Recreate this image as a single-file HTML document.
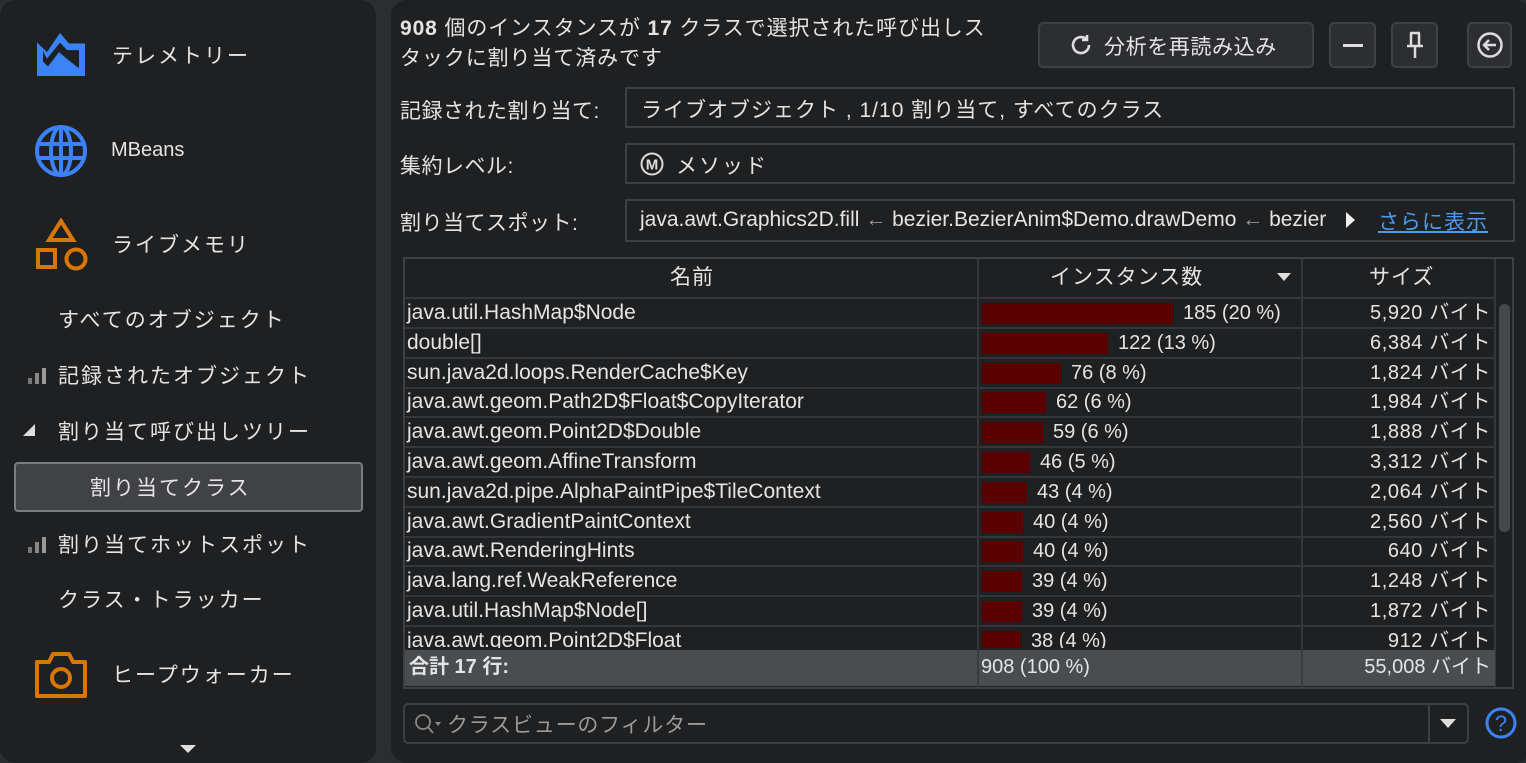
<!DOCTYPE html>
<html><head><meta charset="utf-8"><style>
*{margin:0;padding:0;box-sizing:border-box}
body{width:1526px;height:763px;background:#2b2d30;font-family:"Liberation Sans","Noto Sans CJK JP",sans-serif;color:#e4e4e4;position:relative;overflow:hidden}
.a{position:absolute;white-space:nowrap}
.side{left:0;top:0;width:376px;height:763px;background:#1f2022;border-radius:16px}
.main{left:391px;top:0;width:1140px;height:763px;background:#1f2022;border-radius:16px}
.nav{font-size:21px;letter-spacing:2px}
.box{border:2px solid #3d3f42;background:#1f2022}
.btn{background:#2c2e31;border:2px solid #3e4043;border-radius:5px}
.tb{left:403px;top:257px;width:1111px;height:432px;border:2px solid #3d3f42;background:#1f2022;overflow:hidden}
.row{position:absolute;left:0;width:1090px;height:30px;border-bottom:2px solid #34363a;font-size:20px;line-height:24px}
.row span{position:absolute;top:2px;line-height:24px;height:24px}
.bar{position:absolute;top:4px;height:21px;background:#5a0000}
.vl{position:absolute;top:0;width:2px;background:#34363a}
</style></head><body>
<div class="a side"></div>
<div class="a main"></div>

<!-- sidebar -->
<svg class="a" style="left:36px;top:31px" width="50" height="46" viewBox="0 0 50 48" preserveAspectRatio="none">
<path d="M1 12 L11 22 L24 2 L33 13 L49 13 L49 47 L1 47 Z" fill="#3b82f6"/>
<path d="M7 21 L11 29 L24 12 L31 20 L43 20 L43 39 L32 30 L23 22 L12 37 L7 32 Z" fill="#1f2022"/>
</svg>
<div class="a nav" style="left:112px;top:40px">テレメトリー</div>
<svg class="a" style="left:33px;top:123px" width="56" height="56" viewBox="0 0 56 56" fill="none" stroke="#3b82f6" stroke-width="4">
<circle cx="28" cy="28" r="24"/><ellipse cx="28" cy="28" rx="10" ry="24"/><line x1="4" y1="21" x2="52" y2="21"/><line x1="4" y1="35" x2="52" y2="35"/><line x1="28" y1="4" x2="28" y2="52"/>
</svg>
<div class="a" style="left:111px;top:139px;font-size:20px">MBeans</div>
<svg class="a" style="left:35px;top:218px" width="54" height="54" viewBox="0 0 54 54" fill="none" stroke="#d97706" stroke-width="4">
<path d="M26 3 L38 22 L14 22 Z"/><rect x="3" y="32" width="17" height="17"/><circle cx="41" cy="41" r="9.5"/>
</svg>
<div class="a nav" style="left:112px;top:229px">ライブメモリ</div>
<div class="a nav" style="left:58px;top:304px">すべてのオブジェクト</div>
<svg class="a" style="left:28px;top:366px" width="20" height="18"><rect x="0" y="12" width="4" height="6" fill="#777"/><rect x="7" y="7" width="4" height="11" fill="#888"/><rect x="14" y="2" width="4" height="16" fill="#999"/></svg>
<div class="a nav" style="left:58px;top:360px">記録されたオブジェクト</div>
<svg class="a" style="left:22px;top:423px" width="14" height="14"><path d="M1 13 L13 13 L13 1 Z" fill="#ddd"/></svg>
<div class="a nav" style="left:58px;top:416px">割り当て呼び出しツリー</div>
<div class="a" style="left:14px;top:462px;width:349px;height:50px;background:#404245;border:2px solid #7a7c7f;border-radius:4px"></div>
<div class="a nav" style="left:90px;top:472px">割り当てクラス</div>
<svg class="a" style="left:28px;top:535px" width="20" height="18"><rect x="0" y="12" width="4" height="6" fill="#777"/><rect x="7" y="7" width="4" height="11" fill="#888"/><rect x="14" y="2" width="4" height="16" fill="#999"/></svg>
<div class="a nav" style="left:58px;top:529px">割り当てホットスポット</div>
<div class="a nav" style="left:58px;top:584px">クラス・トラッカー</div>
<svg class="a" style="left:34px;top:650px" width="54" height="50" viewBox="0 0 54 50" fill="none" stroke="#d97706" stroke-width="4">
<path d="M3 12 L15 12 L19 4 L35 4 L39 12 L51 12 L51 46 L3 46 Z" stroke-linejoin="round"/><circle cx="27" cy="28" r="9"/>
</svg>
<div class="a nav" style="left:112px;top:659px">ヒープウォーカー</div>
<svg class="a" style="left:180px;top:745px" width="16" height="10"><path d="M0 0 L16 0 L8 8 Z" fill="#ddd"/></svg>

<!-- header -->
<div class="a" style="left:400px;top:14px;font-size:21px;line-height:30px;letter-spacing:0.9px"><b>908</b> 個のインスタンスが <b>17</b> クラスで選択された呼び出しス<br>タックに割り当て済みです</div>
<div class="a btn" style="left:1038px;top:22px;width:276px;height:46px"></div>
<svg class="a" style="left:1069px;top:33px" width="24" height="24" viewBox="0 0 24 24" fill="none" stroke="#ddd" stroke-width="2.6"><path d="M20 12 A8 8 0 1 1 17 5.8"/><path d="M18 2 L18 7 L13 7" stroke-linejoin="miter"/></svg>
<div class="a" style="left:1104px;top:31px;font-size:21px;letter-spacing:0.6px">分析を再読み込み</div>
<div class="a btn" style="left:1329px;top:22px;width:47px;height:46px"></div>
<div class="a" style="left:1343px;top:44px;width:20px;height:3px;background:#ddd"></div>
<div class="a btn" style="left:1391px;top:22px;width:47px;height:46px"></div>
<svg class="a" style="left:1405px;top:31px" width="20" height="28" viewBox="0 0 20 28" fill="none" stroke="#ddd" stroke-width="2.5"><path d="M5 2 H15 M6 2 V14 M14 2 V14 M2 15 H18 M10 15 V27"/></svg>
<div class="a btn" style="left:1467px;top:22px;width:45px;height:46px"></div>
<svg class="a" style="left:1476px;top:31px" width="28" height="28" viewBox="0 0 28 28" fill="none" stroke="#ddd" stroke-width="2.5"><circle cx="14" cy="14" r="11.5"/><path d="M8 14 H20 M13 9 L8 14 L13 19"/></svg>

<div class="a" style="left:400px;top:95px;font-size:21px;letter-spacing:0.5px">記録された割り当て:</div>
<div class="a box" style="left:625px;top:87px;width:890px;height:41px"></div>
<div class="a" style="left:641px;top:94px;font-size:21px;letter-spacing:1px">ライブオブジェクト , 1/10 割り当て, すべてのクラス</div>
<div class="a" style="left:400px;top:150px;font-size:21px;letter-spacing:0.5px">集約レベル:</div>
<div class="a box" style="left:625px;top:143px;width:890px;height:41px"></div>
<svg class="a" style="left:640px;top:152px" width="24" height="24"><circle cx="12" cy="12" r="10.5" fill="none" stroke="#ddd" stroke-width="2"/><text x="12" y="17.5" text-anchor="middle" font-size="15" font-weight="bold" fill="#ddd" font-family="Liberation Sans">M</text></svg>
<div class="a" style="left:676px;top:150px;font-size:21px;letter-spacing:2px">メソッド</div>
<div class="a" style="left:400px;top:207px;font-size:21px;letter-spacing:0.5px">割り当てスポット:</div>
<div class="a box" style="left:625px;top:199px;width:890px;height:43px"></div>
<div class="a" style="left:640px;top:208px;font-size:21px;letter-spacing:0px">java.awt.Graphics2D.fill <span style="color:#999">←</span> bezier.BezierAnim$Demo.drawDemo <span style="color:#999">←</span> bezier</div>
<svg class="a" style="left:1346px;top:212px" width="10" height="16"><path d="M0 0 L9 8 L0 16Z" fill="#eee"/></svg>
<div class="a" style="left:1378px;top:206px;font-size:21px;color:#4a9bf0;text-decoration:underline;letter-spacing:1px">さらに表示</div>

<!-- table -->
<div class="a tb">
 <div class="row" style="top:0;height:40px;font-size:21px"><span style="left:265px;top:7px;letter-spacing:1px">名前</span><span style="left:645px;top:7px;letter-spacing:1px">インスタンス数</span><span style="left:964px;top:7px;letter-spacing:1px">サイズ</span></div>
 <svg style="position:absolute;left:872px;top:14px" width="14" height="10"><path d="M0 0 L14 0 L7 8Z" fill="#ddd"/></svg>
 <div id="rows"></div>
 <div class="vl" style="left:572px;height:430px"></div>
 <div class="vl" style="left:896px;height:430px"></div>
 <div class="vl" style="left:1089px;height:430px"></div>
 <div style="position:absolute;left:1094px;top:45px;width:11px;height:228px;background:#45484c;border-radius:5px"></div>
 <div style="position:absolute;left:0;top:391px;width:1090px;height:36px;background:#4a4d50;font-size:20px">
  <span style="position:absolute;left:4px;top:5px;font-weight:bold;line-height:24px">合計 17 行:</span>
  <span style="position:absolute;left:576px;top:5px;line-height:24px">908 (100 %)</span>
  <span style="position:absolute;right:4px;top:5px;line-height:24px">55,008 バイト</span>
 </div>
 <div class="vl" style="left:572px;top:391px;height:36px;background:#3a3c3f"></div>
 <div class="vl" style="left:896px;top:391px;height:36px;background:#3a3c3f"></div>
</div>

<!-- filter -->
<div class="a" style="left:403px;top:703px;width:1066px;height:41px;border:2px solid #3d3f42;border-radius:5px;background:#1f2022"></div>
<div class="a" style="left:1428px;top:705px;width:2px;height:37px;background:#3d3f42"></div>
<svg class="a" style="left:1440px;top:719px" width="16" height="10"><path d="M0 0 L16 0 L8 9Z" fill="#ddd"/></svg>
<svg class="a" style="left:413px;top:712px" width="30" height="24" fill="none" stroke="#888" stroke-width="1.8"><circle cx="10" cy="10" r="7"/><path d="M15 15 L20 21"/><path d="M22 10 L28 10 L25 14Z" fill="#888" stroke="none"/></svg>
<div class="a" style="left:447px;top:709px;font-size:21px;color:#9a9a9a;letter-spacing:0.8px">クラスビューのフィルター</div>
<svg class="a" style="left:1484px;top:706px" width="34" height="34"><circle cx="17" cy="17" r="14" fill="none" stroke="#3b82f6" stroke-width="3"/><text x="17" y="25" text-anchor="middle" font-size="22" fill="#3b82f6" font-family="Liberation Sans">?</text></svg>

<script>
var d=[["java.util.HashMap$Node",185,"20","5,920"],["double[]",122,"13","6,384"],["sun.java2d.loops.RenderCache$Key",76,"8","1,824"],["java.awt.geom.Path2D$Float$CopyIterator",62,"6","1,984"],["java.awt.geom.Point2D$Double",59,"6","1,888"],["java.awt.geom.AffineTransform",46,"5","3,312"],["sun.java2d.pipe.AlphaPaintPipe$TileContext",43,"4","2,064"],["java.awt.GradientPaintContext",40,"4","2,560"],["java.awt.RenderingHints",40,"4","640"],["java.lang.ref.WeakReference",39,"4","1,248"],["java.util.HashMap$Node[]",39,"4","1,872"],["java.awt.geom.Point2D$Float",38,"4","912"]];
var h="";d.forEach(function(r,i){var t=40+i*29.8,w=Math.round(r[1]*1.035);
h+='<div class="row" style="top:'+t+'px;'+(i==11?'height:21px;overflow:hidden;border:0':'')+'"><span style="left:2px;font-size:21px">'+r[0]+'</span><div class="bar" style="left:577px;width:'+w+'px"></div><span style="left:'+(587+w)+'px">'+r[1]+' ('+r[2]+' %)</span><span style="right:4px;letter-spacing:0.6px">'+r[3]+' バイト</span></div>';});
document.getElementById("rows").innerHTML=h;
</script>
</body></html>
